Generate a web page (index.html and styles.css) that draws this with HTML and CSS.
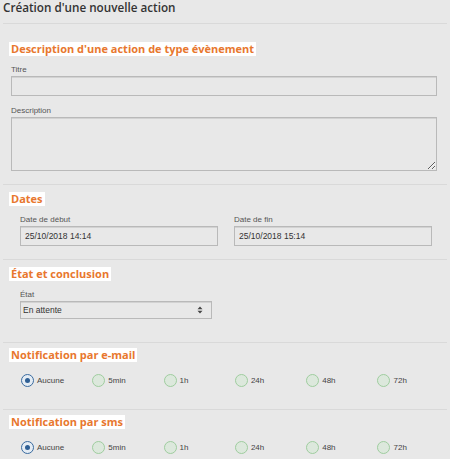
FILE: index.html
```html
<!DOCTYPE html>
<html lang="fr">
<head>
<meta charset="utf-8">
<title>Création d'une nouvelle action</title>
<link rel="stylesheet" href="styles.css">
</head>
<body>
<div class="page">
  <header class="page-head"><h1 class="page-title">Création d'une nouvelle action</h1></header>

  <section class="block block-first">
    <h2 class="block-title">Description d'une action de type évènement</h2>
    <div class="field field-wide">
      <label class="field-label">Titre</label>
      <input class="text-input text-input-wide" type="text">
    </div>
    <div class="field field-wide field-gap">
      <label class="field-label">Description</label>
      <textarea class="text-area"></textarea>
    </div>
  </section>

  <section class="block block-dates">
    <h2 class="block-title">Dates</h2>
    <div class="row-2">
      <div class="field">
        <label class="field-label">Date de début</label>
        <input class="text-input" type="text" value="25/10/2018 14:14">
      </div>
      <div class="field">
        <label class="field-label">Date de fin</label>
        <input class="text-input" type="text" value="25/10/2018 15:14">
      </div>
    </div>
  </section>

  <section class="block block-state">
    <h2 class="block-title">État et conclusion</h2>
    <div class="field field-select">
      <label class="field-label">État</label>
      <div class="select-box">
        <span class="select-value">En attente</span>
        <svg class="select-arrows" width="6" height="8" viewBox="0 0 6 8"><path d="M3 0.5 L5.5 3.2 H0.5 Z M3 7.5 L5.5 4.8 H0.5 Z" fill="#444"/></svg>
      </div>
    </div>
  </section>

  <section class="block block-notif">
    <h2 class="block-title">Notification par e-mail</h2>
    <div class="radio-row">
      <label class="radio"><span class="radio-dot radio-on"></span>Aucune</label>
      <label class="radio"><span class="radio-dot"></span>5min</label>
      <label class="radio"><span class="radio-dot"></span>1h</label>
      <label class="radio"><span class="radio-dot"></span>24h</label>
      <label class="radio"><span class="radio-dot"></span>48h</label>
      <label class="radio"><span class="radio-dot"></span>72h</label>
    </div>
  </section>

  <section class="block block-notif block-last">
    <h2 class="block-title">Notification par sms</h2>
    <div class="radio-row">
      <label class="radio"><span class="radio-dot radio-on"></span>Aucune</label>
      <label class="radio"><span class="radio-dot"></span>5min</label>
      <label class="radio"><span class="radio-dot"></span>1h</label>
      <label class="radio"><span class="radio-dot"></span>24h</label>
      <label class="radio"><span class="radio-dot"></span>48h</label>
      <label class="radio"><span class="radio-dot"></span>72h</label>
    </div>
  </section>
</div>
</body>
</html>
```
FILE: styles.css
```css
* { box-sizing: border-box; }
html, body { margin: 0; padding: 0; }
body {
  background: #e8e8e8;
  font-family: "Liberation Sans", Arial, sans-serif;
  width: 450px;
  height: 459px;
  overflow: hidden;
}
.page { padding: 0 3px; }
.page-head {
  height: 24px;
  border-bottom: 1px solid #d9d9d9;
}
.page-title {
  margin: 0;
  padding-top: 0;
  font-family: "Open Sans", sans-serif;
  font-weight: 600;
  font-size: 11.7px;
  line-height: 14px;
  color: #333;
}
.block {
  border-bottom: 1px solid #d9d9d9;
  padding-left: 6px;
  display: flex;
  flex-direction: column;
  align-items: flex-start;
}
.block-title {
  display: block;
  margin: 0;
  background: #fff;
  height: 14px;
  padding: 0 2px;
  font-family: "Open Sans", sans-serif;
  font-weight: 700;
  font-size: 11px;
  line-height: 14px;
  color: #e8772e;
  white-space: nowrap;
}
.block-first { padding-top: 18px; height: 161px; }
.block-dates { padding-top: 7px; height: 75px; }
.block-state { padding-top: 7px; height: 83px; }
.block-notif { padding-top: 5px; height: 67px; }
.block-last { border-bottom: none; padding-top: 5px; }

.field { display: flex; flex-direction: column; }
.field-label {
  font-size: 8px;
  line-height: 10px;
  color: #555;
  margin-bottom: 1px;
}
.field-wide { padding-left: 2px; margin-top: 9px; }
.field-gap { margin-top: 10px; }

.text-input {
  width: 198px;
  height: 20px;
  border: 1px solid #b9b9b9;
  box-shadow: inset 0 1px 0 #d2d2d2;
  background: #e8e8e8;
  font-family: "Liberation Sans", Arial, sans-serif;
  font-size: 8.5px;
  color: #333;
  padding: 0 4px;
  outline: none;
}
.text-input-wide { width: 426px; }
.text-area {
  display: block;
  width: 426px;
  height: 54px;
  border: 1px solid #b9b9b9;
  box-shadow: inset 0 1px 0 #d2d2d2;
  background: #e8e8e8;
  resize: vertical;
  outline: none;
  margin: 0;
}
.row-2 {
  display: grid;
  grid-template-columns: 214px 200px;
  padding-left: 11px;
  margin-top: 9px;
}
.field-select { padding-left: 11px; margin-top: 9px; }
.select-box {
  width: 192px;
  height: 18px;
  border: 1px solid #b9b9b9;
  box-shadow: inset 0 1px 0 #d2d2d2;
  display: flex;
  align-items: center;
  justify-content: space-between;
  padding: 0 8px 0 2px;
}
.select-value { font-size: 8.5px; color: #333; }
.select-arrows { display: block; }

.radio-row {
  display: grid;
  grid-template-columns: repeat(6, 71.3px);
  padding-left: 12px;
  margin-top: 11px;
}
.radio {
  display: flex;
  align-items: center;
  gap: 3px;
  font-size: 8px;
  color: #444;
  height: 14px;
}
.radio-dot {
  width: 13px;
  height: 13px;
  border-radius: 50%;
  border: 1px solid #9fcd9f;
  background: #dce8dc;
  flex: none;
  position: relative;
}
.radio-on {
  border-color: #3a6b9f;
  background: #e4ecf4;
}
.radio-on::after {
  content: "";
  position: absolute;
  left: 3px;
  top: 3px;
  width: 5px;
  height: 5px;
  border-radius: 50%;
  background: #2e5f95;
}
```
